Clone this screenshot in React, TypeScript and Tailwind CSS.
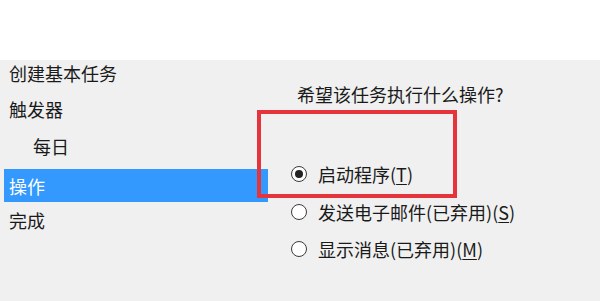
import React from "react";

function Radio({ checked }: { checked?: boolean }) {
  return (
    <span className="w-[16px] h-[16px] rounded-full border-[1.5px] border-[#3a3a3a] bg-white flex items-center justify-center shrink-0">
      {checked && <span className="w-[8px] h-[8px] rounded-full bg-[#222]" />}
    </span>
  );
}

export default function App() {
  const font = "font-['Microsoft_YaHei','Noto_Sans_CJK_SC','Noto_Sans',sans-serif]";
  return (
    <div className={`w-[600px] h-[301px] bg-[#f0f0f0] text-[18px] text-[#1a1a1a] relative overflow-hidden ${font}`}>
      <div className="h-[60px] bg-white" />
      <div className="flex">
        <div className="w-[268px] pl-[4px] -mt-[5px] flex flex-col leading-none">
          <div className="h-[36px] flex items-center pl-[5px]">创建基本任务</div>
          <div className="h-[36px] flex items-center pl-[5px]">触发器</div>
          <div className="h-[37px] flex items-center pl-[29px]">每日</div>
          <div className="mt-[5px] h-[33px] flex items-center pl-[5px] bg-[#3399ff] text-white">操作</div>
          <div className="h-[36px] flex items-center pl-[5px]">完成</div>
        </div>
        <div className="flex flex-col pl-[23px] leading-none">
          <div className="h-[36px] mt-[16px] flex items-center pl-[6px]">希望该任务执行什么操作?</div>
          <div className="mt-[43px] flex flex-col">
            <div className="h-[38px] flex items-center gap-[11px]">
              <Radio checked />
              <span>
                启动程序(<span className="underline underline-offset-2">T</span>)
              </span>
            </div>
            <div className="h-[38px] flex items-center gap-[11px]">
              <Radio />
              <span>
                发送电子邮件(已弃用)(<span className="underline underline-offset-2">S</span>)
              </span>
            </div>
            <div className="h-[36px] flex items-center gap-[11px]">
              <Radio />
              <span>
                显示消息(已弃用)(<span className="underline underline-offset-2">M</span>)
              </span>
            </div>
          </div>
        </div>
      </div>
      <div className="absolute left-[257px] top-[110px] w-[200px] h-[88px] border-[4px] border-[#e5343c]" />
    </div>
  );
}
